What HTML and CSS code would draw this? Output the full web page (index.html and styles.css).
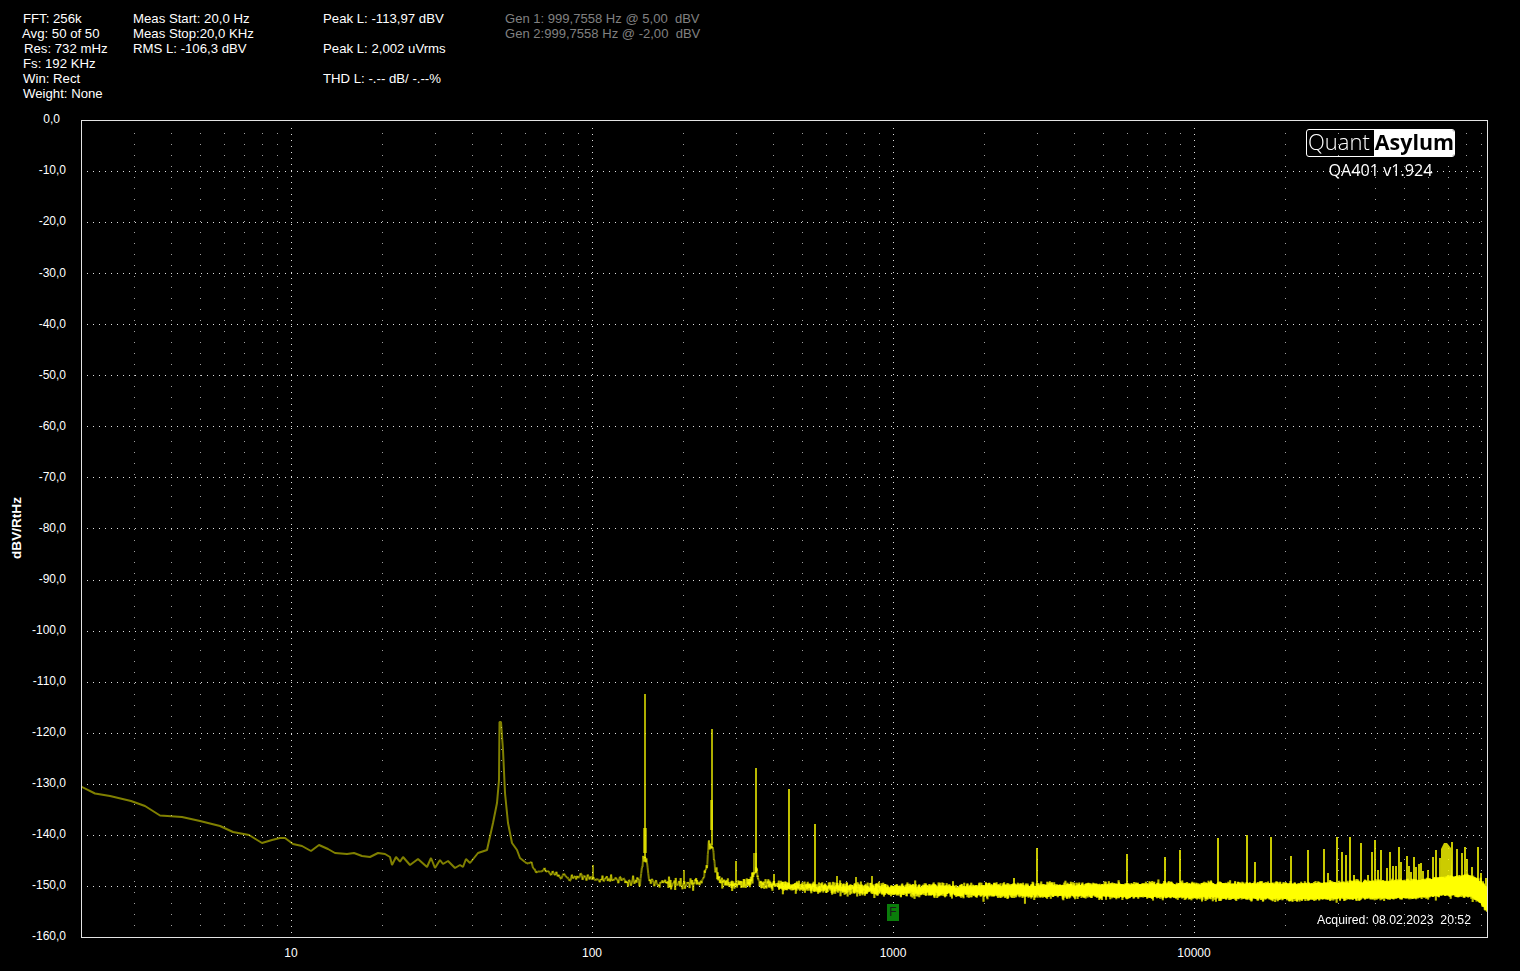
FILE: index.html
```html
<!DOCTYPE html>
<html lang="en">
<head>
    <meta charset="UTF-8">
    <title>QA401 Analyzer</title>
    <link rel="stylesheet" href="styles.css">
</head>
<body>
    <div class="readout">
        <div class="col">
            <div>FFT: 256k</div>
            <div class="back">Avg: 50 of 50</div>
            <div class="fwd">Res: 732 mHz</div>
            <div>Fs: 192 KHz</div>
            <div>Win: Rect</div>
            <div>Weight: None</div>
        </div>
        <div class="col">
            <div>Meas Start: 20,0 Hz</div>
            <div>Meas Stop:20,0 KHz</div>
            <div>RMS L: -106,3 dBV</div>
        </div>
        <div class="col">
            <div>Peak L: -113,97 dBV</div>
            <div>&nbsp;</div>
            <div>Peak L: 2,002 uVrms</div>
            <div>&nbsp;</div>
            <div>THD L: -.-- dB/ -.--%</div>
        </div>
        <div class="col gen">
            <div>Gen 1: 999,7558 Hz @ 5,00  dBV</div>
            <div>Gen 2:999,7558 Hz @ -2,00  dBV</div>
        </div>
    </div>

    <div class="scope">
        <div class="y-axis">
            <div class="y-title">dBV/RtHz</div>
            <div class="y-ticks">
                <span class="tick-zero">0,0</span><span>-10,0</span><span>-20,0</span><span>-30,0</span>
                <span>-40,0</span><span>-50,0</span><span>-60,0</span><span>-70,0</span>
                <span>-80,0</span><span>-90,0</span><span>-100,0</span><span>-110,0</span>
                <span>-120,0</span><span>-130,0</span><span>-140,0</span><span>-150,0</span>
                <span>-160,0</span>
            </div>
        </div>
        <div class="plot">
            <canvas id="trace" width="1405" height="816"></canvas>
            <div class="brand">
                <div class="logo"><span class="logo-quant">Quant</span><span class="logo-asylum">Asylum</span></div>
                <div class="version">QA401 v1.924</div>
            </div>
            <div class="marker">F</div>
            <div class="acquired">Acquired: 08.02.2023  20:52</div>
        </div>
        <div class="x-axis">
            <span>10</span><span>100</span><span>1000</span><span>10000</span>
        </div>
    </div>
    <script src="chart.js"></script>
</body>
</html>
```
FILE: styles.css
```css
html, body {
    margin: 0;
    background-color: #000;
}
body {
    width: 1520px;
    height: 971px;
    overflow: hidden;
    color: #fff;
    font-family: "Liberation Sans", Arial, sans-serif;
    font-size: 12px;
}
.readout {
    display: grid;
    grid-template-columns: 110px 190px 182px auto;
    box-sizing: border-box;
    height: 120px;
    padding: 11px 0 0 23px;
    font-size: 13.2px;
    line-height: 15px;
}
.back {
    margin-left: -1px;
}
.fwd {
    margin-left: 1px;
}
.gen {
    color: #808080;
    font-size: 13.05px;
}
.gen div {
    white-space: pre;
}
.scope {
    display: grid;
    grid-template-columns: 81px 1407px;
}
.y-axis {
    display: flex;
    justify-content: space-between;
    margin: -7.6px 0 -5px;
}
.y-title {
    align-self: center;
    margin-left: 10px;
    writing-mode: vertical-rl;
    transform: rotate(180deg);
    font-size: 13.6px;
    font-weight: bold;
    line-height: 14px;
}
.y-ticks {
    display: flex;
    flex-direction: column;
    justify-content: space-between;
    align-items: flex-end;
    padding-right: 15px;
    line-height: 14px;
}
.tick-zero {
    margin-right: 6px;
}
.plot {
    position: relative;
    height: 816px;
    border: 1px solid #e4e4e4;
}
#trace {
    display: block;
}
.brand {
    position: absolute;
    top: 8px;
    right: 32px;
    display: flex;
    flex-direction: column;
    align-items: center;
}
.logo {
    display: flex;
    width: 149px;
    height: 28px;
    box-sizing: border-box;
    border: 1px solid #fff;
    border-radius: 3px;
    overflow: hidden;
    font-family: "Open Sans", sans-serif;
    font-size: 22px;
    line-height: 23px;
}
.logo-quant {
    width: 67px;
    padding-left: 1px;
    box-sizing: border-box;
    font-weight: 300;
}
.logo-asylum {
    flex: 1;
    padding-left: 1px;
    background-color: #fff;
    color: #000;
    font-weight: 700;
    font-size: 21.4px;
}
.version {
    margin-top: 3px;
    font-family: "Open Sans", sans-serif;
    font-size: 16.2px;
    line-height: 20px;
}
.marker {
    position: absolute;
    left: 805px;
    top: 783px;
    width: 12px;
    height: 17px;
    background-color: #0a7d0a;
    color: #1a1a1a;
    text-align: center;
    line-height: 16px;
}
.acquired {
    position: absolute;
    right: 16px;
    bottom: 10px;
    font-size: 12.25px;
    line-height: 14px;
    white-space: pre;
}
.x-axis {
    grid-column: 2;
    display: grid;
    grid-template-columns: repeat(4, 301px);
    margin: 8px 0 0 59.5px;
    text-align: center;
    line-height: 14px;
}
```
FILE: chart.js
```js
// spectrum plot, everything here is in page pixels
const canvas = document.getElementById('trace');
const ctx = canvas.getContext('2d');
ctx.translate(-82, -121);

const PLOT = { left: 81, right: 1487, top: 120, bottom: 937 };
const xOf = f => 291 + 301 * (Math.log10(f) - 1);

// small seeded generator so the noise is the same on each load
let seed = 401;
function rnd() {
    seed = (seed * 1664525 + 1013904223) >>> 0;
    return seed / 4294967296;
}
function gauss() {
    return (rnd() + rnd() + rnd() + rnd() + rnd() + rnd() - 3) / 0.707;
}

function drawGrid() {
    ctx.fillStyle = '#e0e0e0';
    for (let k = 1; k < 16; k++) {
        const y = Math.round(PLOT.top + k * 51.06);
        for (let x = 87; x < PLOT.right - 5; x += 6) ctx.fillRect(x, y, 1, 1);
    }
    for (let d = 1; d <= 5; d++) {
        for (let n = 1; n < 10; n++) {
            const x = Math.round(xOf(n * Math.pow(10, d - 1)));
            if (x <= PLOT.left || x >= PLOT.right) continue;
            if (n === 1) {
                ctx.fillStyle = '#e0e0e0';
                for (let y = 128; y < PLOT.bottom - 3; y += 6) ctx.fillRect(x, y, 1, 1);
            } else {
                ctx.fillStyle = '#a0a0a0';
                for (let y = 133; y < PLOT.bottom - 3; y += 11) ctx.fillRect(x, y, 1, 1);
            }
        }
    }
}

// first part of the curve, read off point by point
const LOW = [
    [81,786.5],[95,793.5],[110,796],[131,801],[145,806],[160,815.5],[182,817],[200,821],[220,826],
    [233,832],[249,835],[262,843],[272,840],[280,838],[285,838],[293,844],[302,846],[311,851],
    [319,845],[328,849],[335,853],[347,854],[354,853],[362,856],[370,857],[378,853],[385,854],
    [390,857],[392,865],[396,857],[400,861.7],[403,857],[410,865],[418,859],[427,867],[431,858],
    [435,868],[440,860],[443,864],[448,861],[455,868],[460,865],[463,867],[466,859],[470,863],
    [478,853],[487,850],[489,841],[493,823],[497,803],[499,780],[499.5,722],[501,722],[503,750],
    [505,793],[508,823],[512,843],[517,850],[520,858],[525,862]
];

// centre of the noise band from there on
const BAND = [
    [525,862],[535,869],[550,873],[570,877],[590,878],[640,881],
    [642,868],[644,858],[647,860],[648,876],[650,880],[655,883],[665,884],[680,884],
    [690,884],[700,883],[704,878],[707,867],[708.5,845],[713,845],[715,867],[718,877],[722,881],
    [730,884],[750,883],[752,878],[754,872],[757,872],[758,880],[762,885],[800,886.5],[893,890],
    [1000,890.5],[1200,890.5],[1300,891.5],[1360,890],[1420,889],[1445,886],[1470,886],
    [1478,890],[1487,899]
];

const SIGMA = [[525,1.8],[640,2.2],[700,2.6],[800,3],[893,3.1],[1200,3.1],[1440,3.2],[1487,4]];

function lerp(table, x) {
    let i = 1;
    while (i < table.length - 1 && table[i][0] < x) i++;
    const a = table[i - 1], b = table[i];
    const t = Math.min(1, Math.max(0, (x - a[0]) / (b[0] - a[0])));
    return a[1] + (b[1] - a[1]) * t;
}

function drawTrace() {
    ctx.save();
    ctx.beginPath();
    ctx.rect(PLOT.left, PLOT.top, PLOT.right - PLOT.left, PLOT.bottom - PLOT.top);
    ctx.clip();
    ctx.strokeStyle = 'rgba(255,255,0,0.5)';
    ctx.lineWidth = 2;
    ctx.lineJoin = 'bevel';

    ctx.beginPath();
    LOW.forEach((p, i) => (i ? ctx.lineTo(p[0], p[1]) : ctx.moveTo(p[0], p[1])));
    ctx.stroke();

    // every FFT bin gets its own stroke so dense regions add up to full yellow
    let px = 525, py = 862;
    for (let bin = 83; bin <= 131072; bin++) {
        const x = xOf(bin * 0.7324);
        if (x > PLOT.right) break;
        let y = lerp(BAND, x) + gauss() * lerp(SIGMA, x);
        if (rnd() < 0.0015) y += 3 + rnd() * 3;
        ctx.beginPath();
        ctx.moveTo(px, py);
        ctx.lineTo(x, y);
        ctx.stroke();
        px = x;
        py = y;
    }
    ctx.restore();
}

// harmonics and spurs: x, top, alpha
const SPIKES = [
    [592,865,0.55],[644,694,0.68],[711,729,0.68],[755,768,0.72],[788,789,0.75],[814,824,0.75],[735,861,0.7],[683,870,0.6],
    [773,874,0.7],[836,876,0.7],[855,877,0.7],[871,876,0.7],
    [1013,878],[1036,848],[1126,854],[1164,857],[1179,850],[1217,838],[1246,835],[1254,862],
    [1270,837],[1290,856],[1307,850],[1323,849],[1327,873],[1336,837],[1341,852],[1345,855],
    [1349,837],[1353,875],[1360,843],[1367,875],[1371,852],[1374,840],[1377,870],[1380,850],
    [1386,868],[1389,852],[1392,866],[1395,866],[1398,847],[1400,862],[1406,856],[1408,866],
    [1410,872],[1413,857],[1415,867],[1418,864],[1420,863],[1422,871],[1427,870],[1432,857],
    [1435,850],[1439,858],[1451,842],[1456,849],[1461,853],[1464,847],[1466,859],[1471,867],
    [1477,847],[1480,873],[1485,878]
];

function drawSpikes() {
    SPIKES.forEach(s => {
        ctx.fillStyle = 'rgba(255,255,0,' + (s[2] || 0.78) + ')';
        ctx.fillRect(s[0], s[1], 2, lerp(BAND, s[0]) - s[1]);
    });
    // thick lower part of the big peaks
    ctx.fillStyle = 'rgba(255,255,0,0.55)';
    ctx.fillRect(643, 828, 4, 25);
    ctx.fillRect(710, 800, 3, 30);
    ctx.fillRect(753, 853, 4, 20);
    // hump near the top end
    ctx.fillStyle = 'rgba(255,255,0,0.8)';
    ctx.beginPath();
    ctx.moveTo(1441, 880);
    ctx.lineTo(1441, 849);
    ctx.lineTo(1444, 843);
    ctx.lineTo(1447, 843);
    ctx.lineTo(1451, 848);
    ctx.lineTo(1452, 880);
    ctx.fill();
}

drawGrid();
drawTrace();
drawSpikes();
```
